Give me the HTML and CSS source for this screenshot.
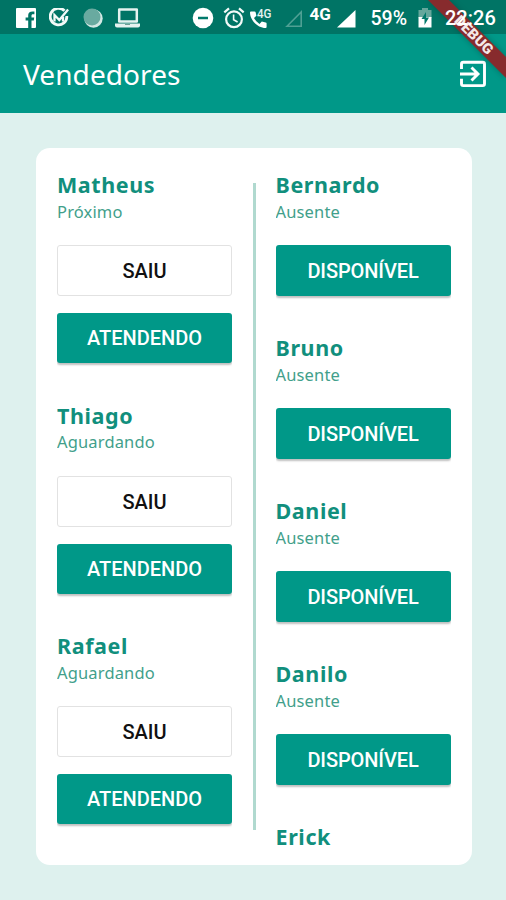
FILE: index.html
```html
<!DOCTYPE html>
<html lang="pt-BR">
<head>
<meta charset="utf-8">
<title>Vendedores</title>
<link rel="stylesheet" href="styles.css">
</head>
<body>
<header class="status">
  <svg class="facebook" width="20" height="20" viewBox="0 0 20 20"><path fill="#fff" d="M1 0h18a1 1 0 0 1 1 1v18a1 1 0 0 1-1 1h-3.500v-7.500h2.300l.4-3h-2.700V7.800c0-1 .4-1.500 1.500-1.500H18.400V3.600c-4.300-.6-6.200.8-6.200 3.700v2.200H9.600v3h2.600V20H1a1 1 0 0 1-1-1V1a1 1 0 0 1 1-1z"/></svg>
  <svg class="check" width="22" height="20" viewBox="0 0 22 20" fill="none" stroke="#f3faf8"><path stroke-width="2.800" d="M15.500 2.800A8.300 8.300 0 1 0 17.800 8"/><path stroke-width="2.300" d="M5.500 13.500V7l4.800 5 8.800-10.500M14 9v4.500"/></svg>
  <svg class="orb" width="20" height="20" viewBox="0 0 20 20"><circle cx="10.500" cy="10.500" r="9.200" fill="#d3e8e4"/><circle cx="9" cy="9" r="8.500" fill="#69aaa0"/></svg>
  <svg class="laptop" width="26" height="20" viewBox="0 0 26 20"><path fill="none" stroke="#e4f2ef" stroke-width="2.500" stroke-linejoin="round" d="M4.200 1.500h17.600v12H4.200z"/><path fill="#e4f2ef" d="M0 15.500h25v2q0 2-2 2H2q-2 0-2-2z"/><path stroke="#6c9e95" d="M10 16.500h5"/></svg>
  <svg class="dnd" width="22" height="22" viewBox="0 0 22 22"><circle cx="11" cy="11" r="10.300" fill="#fff"/><path stroke="#00796b" stroke-width="2.500" d="M6 11h10"/></svg>
  <svg class="alarm" width="22" height="22" viewBox="0 0 22 22" fill="none" stroke="#f3faf8" stroke-width="2.200"><circle cx="11" cy="12.300" r="7.900"/><path d="M1.300 5.300l4.700-4M20.700 5.300l-4.700-4"/><path stroke-width="1.600" d="M10.600 7.500v5.200l4 2.300"/></svg>
  <svg class="call" width="24" height="22" viewBox="0 0 24 22"><path fill="#fff" d="M1 4.500h3.500q1 0 1.200 1l.7 3.300-2.400 2.300q2 4 5.500 5.800l2.300-2.300 3.800.8q1 .2 1 1V20q0 1-1 1C7.500 21 0 13 0 5.500q0-1 1-1z"/><text x="7" y="10.500" textLength="14.500" lengthAdjust="spacingAndGlyphs" class="mini">4G</text></svg>
  <svg class="nosignal" width="18" height="18" viewBox="0 0 18 18"><path fill="none" stroke="#4fa094" stroke-width="1.600" d="M2 16.200L16.200 2v14.200z"/></svg>
  <span class="network">4G</span>
  <svg class="signal" width="19" height="18" viewBox="0 0 19 18"><path fill="#fff" d="M0 17.500L18.500 0v17.500z"/></svg>
  <span class="percent">59%</span>
  <svg class="battery" width="14" height="20" viewBox="0 0 14 20"><path fill="#65a79c" d="M4 0h6v2h3.500v8H.5V2H4z"/><path fill="#fff" d="M.5 9h13v10.500H.5z"/><path fill="#00796b" d="M8 4L3.500 11h3v6L11 9.500H8z"/></svg>
  <span class="clock">22:26</span>
</header>
<div class="appbar">
  <h1>Vendedores</h1>
  <svg class="exit" width="28" height="28" viewBox="0 0 28 28" fill="none" stroke="#fff" stroke-width="2.900"><path d="M2.500 9V4q0-1.800 1.800-1.800h19.400q1.800 0 1.800 1.800v19.800q0 1.800-1.800 1.800H4.300q-1.800 0-1.800-1.800v-5"/><path d="M1 14h17M12.500 7.500L19 14l-6.500 6.500"/></svg>
</div>
<svg class="banner" width="86" height="86" viewBox="0 0 86 86"><path class="shade" d="M8 0h21l57 57v21z"/><path fill="#872b2d" d="M8 0h21l57 57v21z"/><text transform="translate(54 35) rotate(45)" x="-24" y="5" textLength="48" lengthAdjust="spacingAndGlyphs">DEBUG</text></svg>
<main class="card">
  <section class="column busy">
    <article><h2>Matheus</h2><p>Próximo</p><button class="plain">SAIU</button><button>ATENDENDO</button></article>
    <article><h2>Thiago</h2><p>Aguardando</p><button class="plain">SAIU</button><button>ATENDENDO</button></article>
    <article><h2>Rafael</h2><p>Aguardando</p><button class="plain">SAIU</button><button>ATENDENDO</button></article>
  </section>
  <div class="divider"></div>
  <section class="column away">
    <article><h2>Bernardo</h2><p>Ausente</p><button>DISPONÍVEL</button></article>
    <article><h2>Bruno</h2><p>Ausente</p><button>DISPONÍVEL</button></article>
    <article><h2>Daniel</h2><p>Ausente</p><button>DISPONÍVEL</button></article>
    <article><h2>Danilo</h2><p>Ausente</p><button>DISPONÍVEL</button></article>
    <article><h2>Erick</h2></article>
  </section>
</main>
</body>
</html>
```

FILE: styles.css
```css
* { box-sizing: border-box; }
body { margin: 0; height: 900px; overflow: hidden; position: relative; background: #def1ee; font-family: "Noto Sans", sans-serif; }
h1, h2, p { margin: 0; }
.status { height: 34px; background: #007465; display: flex; align-items: flex-start; padding: 8px 0 0 16px; color: #fff; font-family: Roboto, sans-serif; font-weight: 500; white-space: nowrap; }
.status > * { flex: none; }
.check { margin-left: 13px; }
.orb { margin-left: 12px; }
.laptop { margin-left: 12px; }
.dnd { margin: -1px 0 0 51px; }
.alarm { margin: -1px 0 0 9px; }
.call { margin: -1px 0 0 5px; }
.mini { font: 500 12px Roboto, sans-serif; fill: #e4f2ef; }
.nosignal { margin: 2px 0 0 11px; }
.network { width: 22px; margin: -4px 0 0 6.500px; font-size: 17px; line-height: 20px; font-weight: 700; }
.signal { margin: 2px 0 0 5.500px; }
.percent { width: 40px; margin: 0 0 0 14.500px; font-size: 19.500px; line-height: 22px; }
.battery { margin-left: 7.500px; }
.clock { position: relative; z-index: 2; margin: -1px 0 0 13px; font-size: 20px; line-height: 22px; }
.appbar { height: 79px; background: #009888; display: flex; align-items: center; justify-content: space-between; padding: 0 19px 0 23px; color: #fff; }
.appbar h1 { font-size: 28px; line-height: 40px; font-weight: 400; letter-spacing: .08px; }
.banner { position: absolute; top: 0; right: 0; z-index: 1; }
.banner text { font: 900 14.500px Roboto, sans-serif; fill: #f3e8e8; }
.shade { fill: #00352e; opacity: .4; filter: blur(3px); }
.card { width: 436px; height: 717px; margin: 35px 0 0 36px; padding: 21px; border-radius: 14px; background: #fff; display: flex; }
.column { width: 175px; height: 676px; overflow: hidden; }
.divider { width: 3px; height: 647px; margin: 14px 20px 0 20.500px; background: #b0d9cf; }
.busy article { height: 230.500px; }
.away article { height: 163.100px; }
h2 { color: #118f7d; font-size: 21.500px; line-height: 31.500px; font-weight: 700; letter-spacing: .6px; }
p { color: #429f8b; font-size: 16.500px; line-height: 22.500px; margin-bottom: 22px; letter-spacing: .15px; }
button { display: block; width: 175px; height: 50px; margin: 0 0 17px; padding: 0; border: 0; border-radius: 3px; background: #009888; color: #fff; font: 500 20px/50px Roboto, sans-serif; box-shadow: 0 2px 2px rgba(0,0,0,.25); }
.away button { height: 50.500px; line-height: 52px; letter-spacing: -.1px; }
button.plain { height: 51px; border: 1px solid #e2e2e2; background: #fff; color: #111; box-shadow: none; }
```
